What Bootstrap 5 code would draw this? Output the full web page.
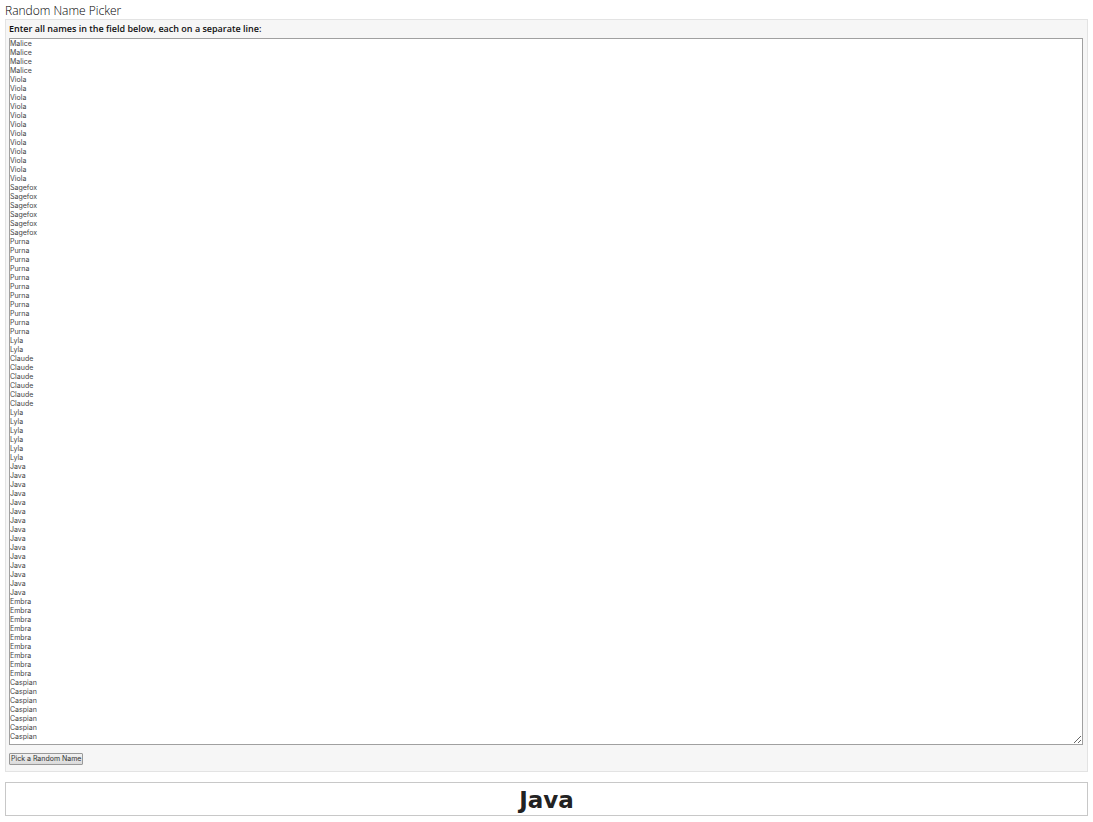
<!DOCTYPE html>
<html lang="en">
<head>
<meta charset="utf-8">
<meta name="viewport" content="width=device-width, initial-scale=1">
<title>Random Name Picker</title>
<link href="https://cdn.jsdelivr.net/npm/bootstrap@5.3.0/dist/css/bootstrap.min.css" rel="stylesheet">
<style>
  body { font-family: "DejaVu Sans", sans-serif; color: #222; padding: 3px 5px 6px; }
  .page-title { font: 300 12px/16px "Open Sans", sans-serif; color: #000; }
  .picker { background: #f6f6f6; border: 1px solid #e3e3e3; padding: 3px 4px 6px 3px; }
  .picker-label { font: 600 9px/11px "Open Sans", sans-serif; color: #111; }
  .names { font: 7px/9px Inter, "Liberation Sans", sans-serif; color: #444; background: #fff; border: 1px solid #a0a0a0; padding: 0 0 3px; overflow: hidden; resize: both; }
  .pick { font: 7px/10px Inter, "Liberation Sans", sans-serif; color: #333; background: linear-gradient(#f2f2f2, #dadada); border: 1px solid #999; border-radius: 1px; padding: 0 1px; }
  .result { border: 1px solid #c8c8c8; font-size: 23px; line-height: 30px; margin-top: 10px; padding-top: 2px; }
</style>
</head>
<body>
<main>
  <h1 class="page-title mb-0">Random Name Picker</h1>
  <form class="picker">
    <label for="names" class="picker-label d-block mb-1">Enter all names in the field below, each on a separate line:</label>
    <textarea id="names" class="names d-block w-100" rows="78" spellcheck="false">Malice
Malice
Malice
Malice
Viola
Viola
Viola
Viola
Viola
Viola
Viola
Viola
Viola
Viola
Viola
Viola
Sagefox
Sagefox
Sagefox
Sagefox
Sagefox
Sagefox
Purna
Purna
Purna
Purna
Purna
Purna
Purna
Purna
Purna
Purna
Purna
Lyla
Lyla
Claude
Claude
Claude
Claude
Claude
Claude
Lyla
Lyla
Lyla
Lyla
Lyla
Lyla
Java
Java
Java
Java
Java
Java
Java
Java
Java
Java
Java
Java
Java
Java
Java
Embra
Embra
Embra
Embra
Embra
Embra
Embra
Embra
Embra
Caspian
Caspian
Caspian
Caspian
Caspian
Caspian
Caspian</textarea>
    <button type="button" id="pick" class="pick d-block mt-2">Pick a Random Name</button>
  </form>
  <output for="names" id="result" class="result d-block text-center fw-bold">Java</output>
</main>
<script src="https://cdn.jsdelivr.net/npm/bootstrap@5.3.0/dist/js/bootstrap.bundle.min.js"></script>
<script>
  document.getElementById('pick').addEventListener('click', () => {
    const names = document.getElementById('names').value.split('\n').filter(n => n.trim());
    document.getElementById('result').textContent = names[Math.floor(Math.random() * names.length)] || '';
  });
</script>
</body>
</html>
